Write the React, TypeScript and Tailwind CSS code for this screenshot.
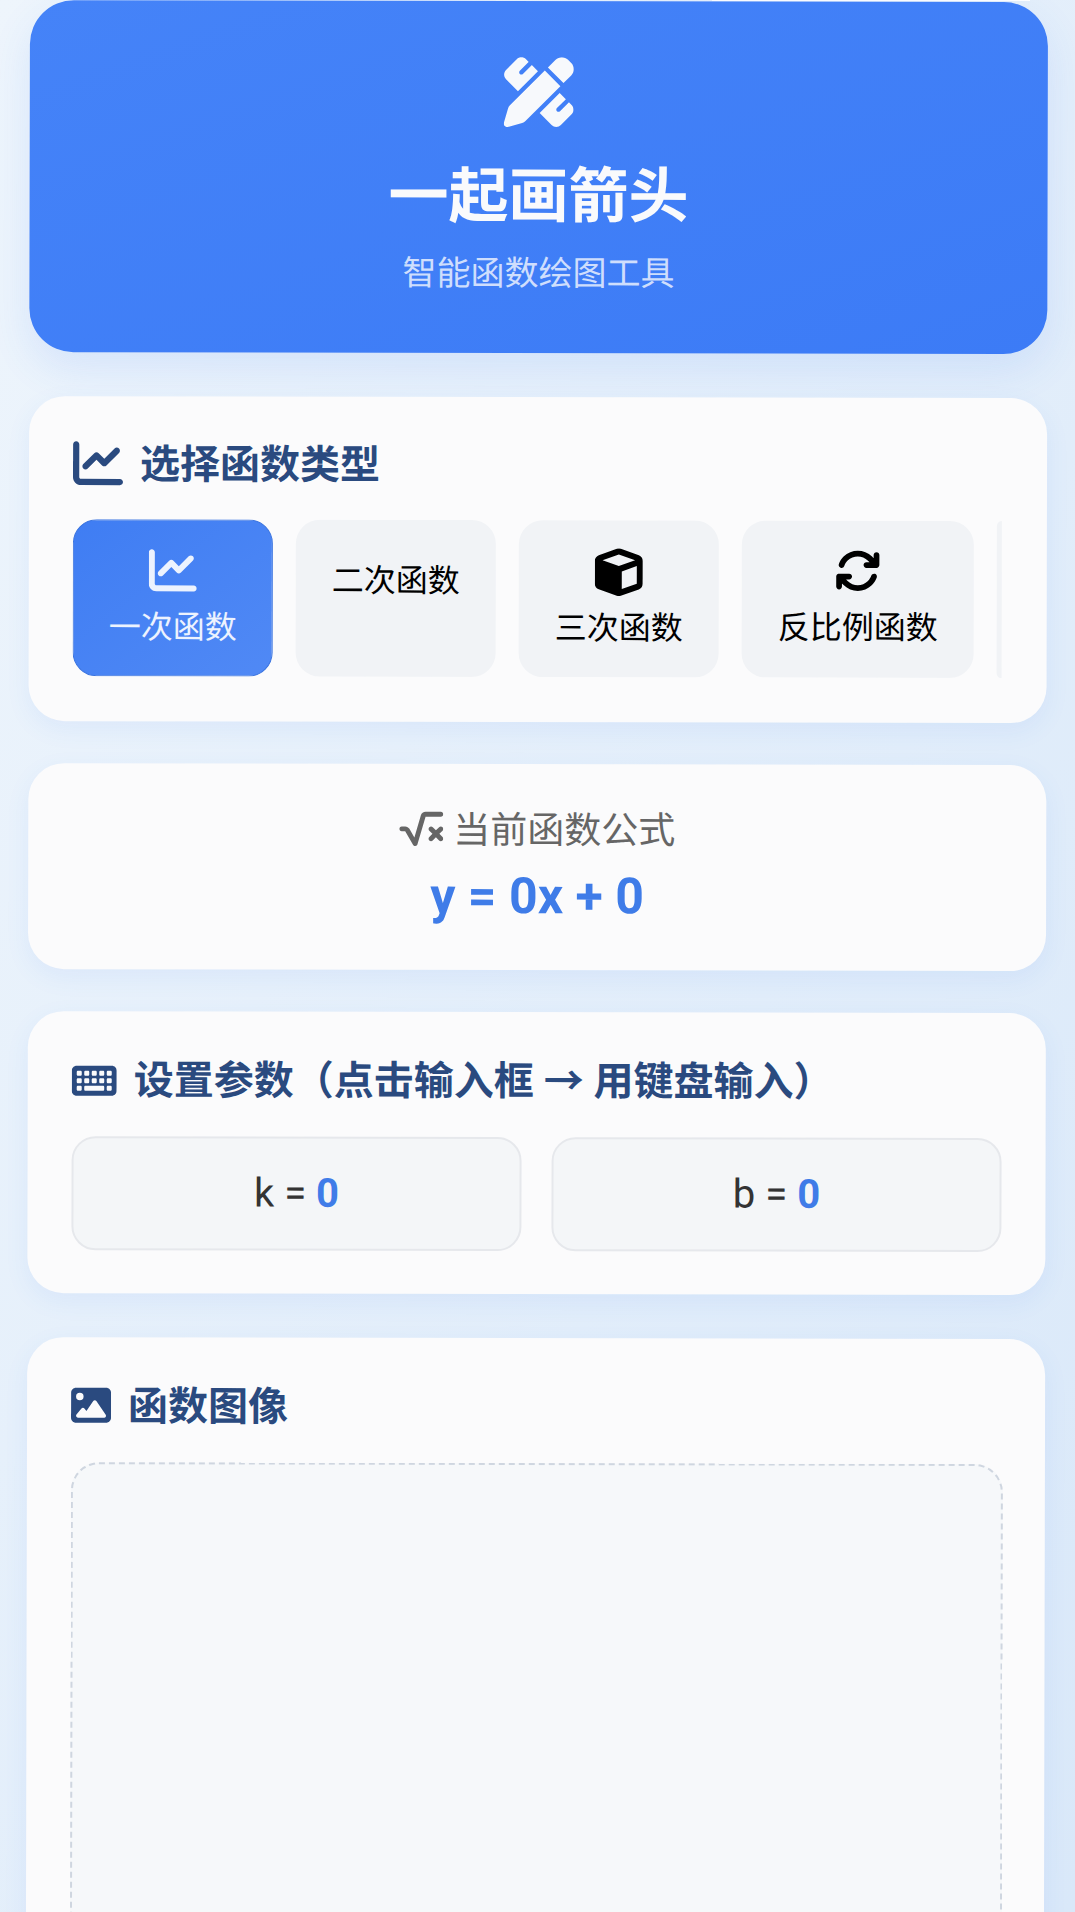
import { FaArrowsRotate, FaChartLine, FaCube, FaImage, FaKeyboard, FaPenRuler, FaSquareRootVariable } from 'react-icons/fa6';

const cardShadow = 'shadow-[0_8px_24px_rgba(59,122,246,0.08)]';

export default function App() {
  return (
    <div className="relative h-[1912px] overflow-hidden bg-linear-to-br from-[#eef5fc] to-[#d9e8f9] [font-family:'Roboto','Noto_Sans_CJK_SC',sans-serif]">
      <div className="absolute right-[45px] top-0 h-[1px] w-[318px] bg-white" />

      <main className="origin-top-left rotate-[0.12deg] pl-[30px] pr-[27px]">
        <header className="flex h-[352px] flex-col items-center rounded-[44px] bg-linear-to-br from-[#4583f8] to-[#3c7bf6] pt-[56px] text-white shadow-[0_16px_40px_rgba(59,122,246,0.12)]">
          <FaPenRuler className="text-[70px] text-[#f7f9fc]" />
          <h1 className="mt-[28px] text-[60px] leading-[84px] font-bold text-[#f9fafc]">一起画箭头</h1>
          <p className="mt-[10px] text-[34px] leading-[48px] text-white/75">智能函数绘图工具</p>
        </header>

        <section className={`mt-[44px] h-[325px] rounded-[36px] bg-[#fbfbfc] px-[44px] pt-[39px] ${cardShadow}`}>
          <h2 className="flex h-[56px] items-center gap-[17px] text-[40px] font-bold text-[#2a4a7f]">
            <FaChartLine className="text-[50px]" />
            <span className="mt-[3px]">选择函数类型</span>
          </h2>
          <div className="mt-[28px] flex gap-[23px] overflow-hidden">
            <div className="flex h-[157px] w-[200px] shrink-0 flex-col items-center rounded-[24px] border border-[#3a74e0] bg-linear-to-br from-[#3f7df3] to-[#5089f5] pt-[26px] text-white/90">
              <FaChartLine className="text-[48px]" />
              <span className="mt-[9px] text-[32px] leading-[48px]">一次函数</span>
            </div>
            <div className="flex h-[157px] w-[200px] shrink-0 flex-col items-center rounded-[24px] bg-[#f1f3f6] pt-[37px] text-black">
              <span className="text-[32px] leading-[48px]">二次函数</span>
            </div>
            <div className="flex h-[157px] w-[200px] shrink-0 flex-col items-center rounded-[24px] bg-[#f1f3f6] pt-[28px] text-black">
              <FaCube className="text-[48px]" />
              <span className="mt-[8px] text-[32px] leading-[48px]">三次函数</span>
            </div>
            <div className="flex h-[157px] w-[232px] shrink-0 flex-col items-center rounded-[24px] bg-[#f1f3f6] pt-[27px] text-black">
              <FaArrowsRotate className="text-[46px]" />
              <span className="mt-[10px] text-[32px] leading-[48px]">反比例函数</span>
            </div>
            <div className="h-[157px] w-[5px] shrink-0 rounded-l-[24px] bg-[#f1f3f6]" />
          </div>
        </section>

        <section className={`mt-[42px] flex h-[206px] flex-col items-center rounded-[36px] bg-[#fbfbfc] pt-[39px] ${cardShadow}`}>
          <div className="flex h-[52px] items-center gap-[10px] text-[37px] text-[#666666]">
            <FaSquareRootVariable className="text-[44px]" />
            <span className="mt-[3px]">当前函数公式</span>
          </div>
          <div className="mt-[9px] text-[50px] leading-[64px] font-bold text-[#3f7ce8]">y = 0x + 0</div>
        </section>

        <section className={`mt-[42px] h-[282px] rounded-[36px] bg-[#fbfbfc] px-[44px] pt-[41px] ${cardShadow}`}>
          <h2 className="flex h-[56px] items-center gap-[17px] text-[40px] font-bold text-[#2a4a7f]">
            <FaKeyboard className="text-[45px]" />
            <span className="mt-[2px]">设置参数（点击输入框 → 用键盘输入）</span>
          </h2>
          <div className="mt-[28px] grid grid-cols-2 gap-[30px]">
            <div className="flex h-[114px] items-center justify-center rounded-[24px] border-2 border-[#e6e8ec] bg-[#f4f6f8] text-[40px] text-[#333333]">
              k =&nbsp;<span className="font-bold text-[#3f7ce8]">0</span>
            </div>
            <div className="flex h-[114px] items-center justify-center rounded-[24px] border-2 border-[#e6e8ec] bg-[#f4f6f8] text-[40px] text-[#333333]">
              b =&nbsp;<span className="font-bold text-[#3f7ce8]">0</span>
            </div>
          </div>
        </section>

        <section className={`mt-[44px] h-[700px] rounded-[36px] bg-[#fbfbfc] pl-[44px] pr-[42px] pt-[40px] ${cardShadow}`}>
          <h2 className="flex h-[56px] items-center gap-[17px] text-[40px] font-bold text-[#2a4a7f]">
            <FaImage className="text-[40px]" />
            <span className="mt-[3px]">函数图像</span>
          </h2>
          <div className="mt-[29px] h-[600px] rounded-[28px] border-2 border-dashed border-[#cfd6e0] bg-[#f6f8fa]" />
        </section>
      </main>
    </div>
  );
}
